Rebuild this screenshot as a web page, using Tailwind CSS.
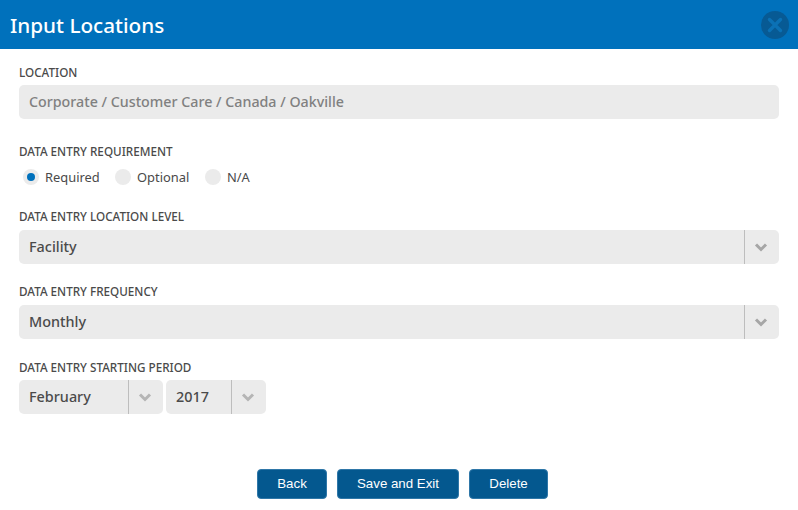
<!DOCTYPE html>
<html lang="en">
<head>
<meta charset="utf-8">
<script src="https://cdn.jsdelivr.net/npm/@tailwindcss/browser@4"></script>
<title>Input Locations</title>
</head>
<body class="bg-white font-['Noto_Sans',sans-serif] text-[#4a4a4a] w-[798px] h-[510px] overflow-hidden">
<header class="h-[49px] bg-[#0071bc] flex items-center justify-between pl-[10px] pr-[9px]">
  <h1 class="text-[20.7px] font-medium text-white leading-none pt-[1px]">Input Locations</h1>
  <button class="w-[28px] h-[28px] rounded-full bg-[#075a94] flex items-center justify-center">
    <svg width="16" height="16" viewBox="0 0 16 16"><path d="M2.5 2.5 13.5 13.5M13.5 2.5 2.5 13.5" stroke="#0b71b5" stroke-width="3.4" stroke-linecap="round"/></svg>
  </button>
</header>
<main class="px-[19px]">
  <p class="mt-[16px] h-[16px] text-[11.7px] leading-[14px] font-medium">LOCATION</p>
  <div class="mt-[4px] h-[34px] rounded-[5px] bg-[#ebebeb] flex items-center pl-[10px] text-[14.25px] font-medium text-[#808080]"><span class="pb-[1px]">Corporate / Customer Care / Canada / Oakville</span></div>

  <p class="mt-[25px] h-[16px] text-[11.7px] leading-[14px] font-medium">DATA ENTRY REQUIREMENT</p>
  <div class="mt-[9px] h-[18px] flex items-center text-[12.9px] pl-[4px]">
    <span class="w-[16px] h-[16px] mb-[2px] rounded-full bg-[#ebebeb] flex items-center justify-center"><span class="w-[8px] h-[8px] rounded-full bg-[#0071bc]"></span></span>
    <span class="ml-[6px] w-[70px]">Required</span>
    <span class="w-[16px] h-[16px] mb-[2px] rounded-full bg-[#ebebeb]"></span>
    <span class="ml-[6px] w-[68px]">Optional</span>
    <span class="w-[16px] h-[16px] mb-[2px] rounded-full bg-[#ebebeb]"></span>
    <span class="ml-[6px]">N/A</span>
  </div>

  <p class="mt-[22px] h-[16px] text-[11.7px] leading-[14px] font-medium">DATA ENTRY LOCATION LEVEL</p>
  <div class="mt-[5px] h-[34px] rounded-[5px] bg-[#ebebeb] flex items-center text-[14.4px] font-medium">
    <span class="flex-1 pl-[10px] pb-[1px]">Facility</span>
    <span class="w-[35px] h-full border-l border-[#bdbdbd] pr-[2px] flex items-center justify-center">
      <svg width="14" height="10" viewBox="0 0 14 10"><path d="M2 2.5 7 7.5 12 2.5" fill="none" stroke="#a6a6a6" stroke-width="3"/></svg>
    </span>
  </div>

  <p class="mt-[20px] h-[16px] text-[11.7px] leading-[14px] font-medium">DATA ENTRY FREQUENCY</p>
  <div class="mt-[5px] h-[34px] rounded-[5px] bg-[#ebebeb] flex items-center text-[14.4px] font-medium">
    <span class="flex-1 pl-[10px] pb-[1px]">Monthly</span>
    <span class="w-[35px] h-full border-l border-[#bdbdbd] pr-[2px] flex items-center justify-center">
      <svg width="14" height="10" viewBox="0 0 14 10"><path d="M2 2.5 7 7.5 12 2.5" fill="none" stroke="#a6a6a6" stroke-width="3"/></svg>
    </span>
  </div>

  <p class="mt-[21px] h-[16px] text-[11.7px] leading-[14px] font-medium">DATA ENTRY STARTING PERIOD</p>
  <div class="mt-[4px] flex gap-[3px]">
    <div class="w-[144px] h-[34px] rounded-[5px] bg-[#ebebeb] flex items-center text-[14.4px] font-medium">
      <span class="flex-1 pl-[10px] pb-[1px]">February</span>
      <span class="w-[35px] h-full border-l border-[#bdbdbd] pr-[2px] flex items-center justify-center">
        <svg width="14" height="10" viewBox="0 0 14 10"><path d="M2 2.5 7 7.5 12 2.5" fill="none" stroke="#b5b5b5" stroke-width="3"/></svg>
      </span>
    </div>
    <div class="w-[100px] h-[34px] rounded-[5px] bg-[#ebebeb] flex items-center text-[14.4px] font-medium">
      <span class="flex-1 pl-[10px] pb-[1px]">2017</span>
      <span class="w-[35px] h-full border-l border-[#bdbdbd] pr-[2px] flex items-center justify-center">
        <svg width="14" height="10" viewBox="0 0 14 10"><path d="M2 2.5 7 7.5 12 2.5" fill="none" stroke="#b5b5b5" stroke-width="3"/></svg>
      </span>
    </div>
  </div>

  <div class="mt-[55px] pl-[7px] flex justify-center gap-[10px] font-['Liberation_Sans',sans-serif] text-[13.3px] text-white">
    <button class="w-[70px] h-[30px] rounded-[4px] bg-[#04588f] border border-[#2f77a8]">Back</button>
    <button class="w-[122px] h-[30px] rounded-[4px] bg-[#04588f] border border-[#2f77a8]">Save and Exit</button>
    <button class="w-[79px] h-[30px] rounded-[4px] bg-[#04588f] border border-[#2f77a8]">Delete</button>
  </div>
</main>
</body>
</html>
